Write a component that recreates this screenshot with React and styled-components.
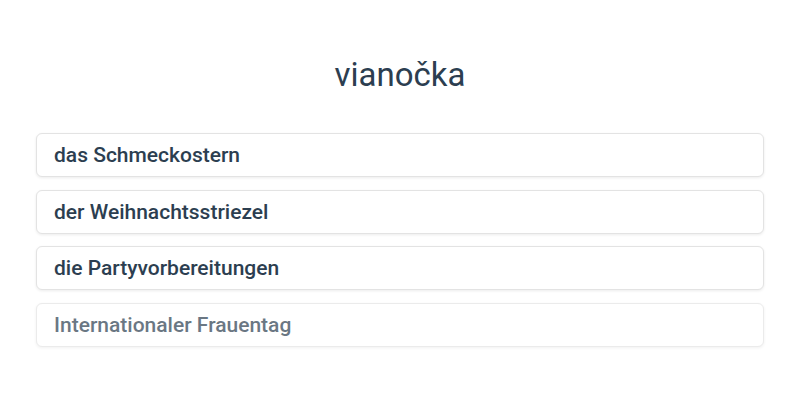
import React from 'react';
import styled, {createGlobalStyle} from 'styled-components';

const GlobalStyle = createGlobalStyle`
	body {
		margin: 0;
		background: #fff;
		font-family: Roboto, "Noto Sans", sans-serif;
	}
`;

const Container = styled.div`
	width: 800px;
	height: 400px;
	box-sizing: border-box;
	padding: 55px 36px 0;
	display: flex;
	flex-direction: column;
`;

const Word = styled.h1`
	margin: 0 0 38px;
	text-align: center;
	font-weight: 400;
	font-size: 33px;
	line-height: 40px;
	color: #2c3e50;
`;

const Options = styled.div`
	display: flex;
	flex-direction: column;
	gap: 12.6px;
`;

const Option = styled.div`
	height: 44px;
	box-sizing: border-box;
	padding: 0 17px;
	display: flex;
	align-items: center;
	border: 1px solid #e3e3e3;
	border-radius: 6px;
	box-shadow: 0 1px 3px rgba(0, 0, 0, 0.08);
	background: #fff;
	font-size: 21px;
	font-weight: 500;
	color: #2c3e50;
	opacity: ${p => (p.$faded ? 0.7 : 1)};
`;

const options = [
	'das Schmeckostern',
	'der Weihnachtsstriezel',
	'die Partyvorbereitungen',
	'Internationaler Frauentag',
];

export default function App() {
	return (
		<>
			<GlobalStyle />
			<Container>
				<Word>vianočka</Word>
				<Options>
					{options.map((o, i) => (
						<Option key={o} $faded={i === options.length - 1}>
							{o}
						</Option>
					))}
				</Options>
			</Container>
		</>
	);
}
